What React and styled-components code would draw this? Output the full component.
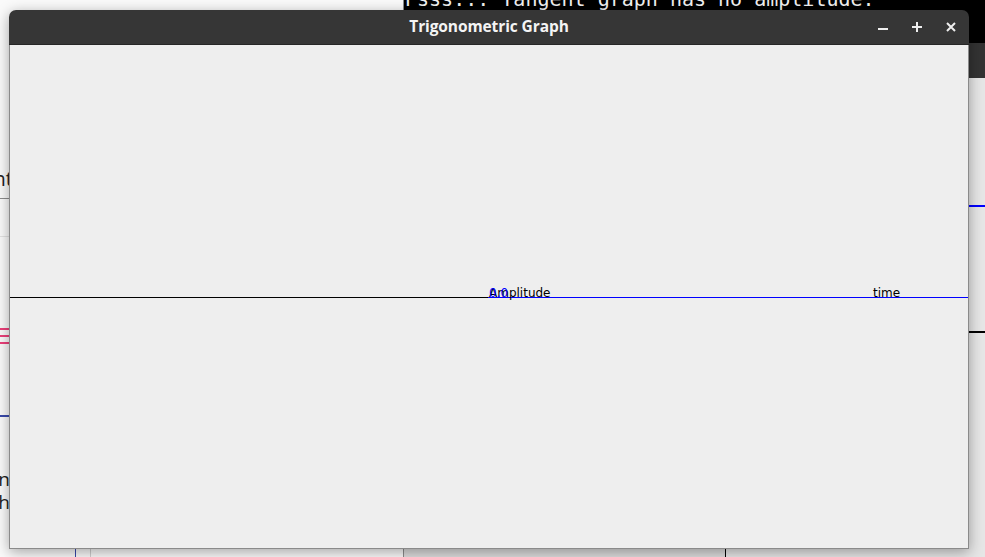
import React from 'react';
import styled, { createGlobalStyle } from 'styled-components';

const GlobalStyle = createGlobalStyle`
  html, body {
    margin: 0;
    padding: 0;
    overflow: hidden;
    background: #fafafa;
  }
`;

const Desktop = styled.div`
  position: relative;
  width: 985px;
  height: 557px;
  overflow: hidden;
  background: #fafafa;
  font-family: 'Open Sans', 'Noto Sans', sans-serif;
`;

/* ---------- background apps (mostly hidden behind the graph window) ---------- */

const LeftApp = styled.div`
  position: absolute;
  left: 0;
  top: 0;
  width: 403px;
  height: 557px;
  background: #fafafa;
  display: flex;
  flex-direction: column;
`;

const HeaderRow = styled.div`
  height: 198px;
  border-bottom: 1px solid #8c8c8c;
  display: flex;
  align-items: flex-end;
  justify-content: flex-end;
  width: 10px;
`;

const HeaderText = styled.span`
  font-size: 20px;
  line-height: 28px;
  color: #222;
  white-space: nowrap;
  margin-bottom: 5px;
  margin-right: -3px;
`;

const FaintRule = styled.div`
  margin-top: 37px;
  height: 1px;
  width: 10px;
  background: #e2e2e2;
`;

const MenuIcon = styled.div`
  margin-top: 91px;
  width: 10px;
  display: flex;
  flex-direction: column;
  gap: 5px;

  span {
    display: block;
    height: 2px;
    background: #ec407a;
  }
`;

const BlueRule = styled.div`
  margin-top: 71px;
  width: 10px;
  height: 2px;
  background: #3949ab;
`;

const BodyText = styled.div`
  margin-top: 51px;
  display: flex;
  flex-direction: column;
  align-items: flex-end;
  width: 10px;
  font-size: 19px;
  line-height: 23px;
  color: #222;
  white-space: nowrap;
`;

const BottomStrip = styled.div`
  margin-top: auto;
  height: 8px;
  display: flex;
`;

const StripCell = styled.div`
  width: ${(p) => p.$w}px;
  border-right: 1px solid ${(p) => p.$line};
  background: ${(p) => p.$bg};
`;

const RightApp = styled.div`
  position: absolute;
  left: 403px;
  top: 0;
  right: 0;
  bottom: 0;
  display: flex;
  flex-direction: column;
  border-left: 1px solid #8c8c8c;
`;

const Terminal = styled.div`
  height: 43px;
  background: #000;
  color: #f2f2f2;
  font-family: 'DejaVu Sans Mono', 'Liberation Mono', monospace;
  font-size: 20px;
  line-height: 20px;
  white-space: pre;
  overflow: hidden;
`;

const TerminalLine = styled.div`
  margin-top: -11px;
  padding-left: 1px;
`;

const BackTitle = styled.div`
  height: 35px;
  background: #333;
`;

const BackBody = styled.div`
  flex: 1;
  background: #e6e6e6;
  display: flex;
  flex-direction: column;
`;

const BackRule = styled.div`
  margin-top: ${(p) => p.$top}px;
  height: ${(p) => p.$h || 1}px;
  background: ${(p) => p.$color};
`;

const BackBottom = styled.div`
  margin-top: auto;
  height: 8px;
  display: flex;
`;

/* ---------- the graph window ---------- */

const Window = styled.div`
  position: absolute;
  left: 9px;
  top: 10px;
  width: 960px;
  height: 539px;
  display: flex;
  flex-direction: column;
  border-radius: 7px 7px 0 0;
  box-shadow: 0 3px 14px rgba(0, 0, 0, 0.35);
`;

const TitleBar = styled.div`
  height: 35px;
  flex: none;
  box-sizing: border-box;
  background: #363636;
  border-radius: 7px 7px 0 0;
  border-bottom: 1px solid #262626;
  display: grid;
  grid-template-columns: 1fr auto 1fr;
  align-items: center;
`;

const Title = styled.div`
  grid-column: 2;
  color: #f4f4f4;
  font-family: 'Open Sans', 'Noto Sans', sans-serif;
  font-weight: 700;
  font-size: 15.5px;
  letter-spacing: -0.1px;
  margin-bottom: 2px;
`;

const Controls = styled.div`
  grid-column: 3;
  justify-self: end;
  display: flex;
  padding-right: 1px;
  height: 100%;
`;

const ControlButton = styled.button`
  width: 34px;
  height: 100%;
  border: none;
  padding: 0;
  background: transparent;
  display: flex;
  align-items: center;
  justify-content: center;
  cursor: pointer;

  svg {
    display: block;
  }
`;

const Canvas = styled.div`
  flex: 1;
  background: #eeeeee;
  border: 1px solid #8a8a8a;
  border-top: none;
  overflow: hidden;
`;

const GraphSvg = styled.svg`
  display: block;
  width: 100%;
  height: 100%;
  font-family: 'DejaVu Sans', sans-serif;
  font-size: 12px;
  shape-rendering: crispEdges;
`;

const MinimizeIcon = () => (
  <svg width="12" height="12" viewBox="0 0 12 12">
    <rect x="1" y="7" width="10" height="2" fill="#eeeeee" />
  </svg>
);

const MaximizeIcon = () => (
  <svg width="12" height="12" viewBox="0 0 12 12">
    <rect x="1" y="5" width="10" height="2" fill="#eeeeee" />
    <rect x="5" y="1" width="2" height="10" fill="#eeeeee" />
  </svg>
);

const CloseIcon = () => (
  <svg width="12" height="12" viewBox="0 0 12 12">
    <path d="M2 2 L10 10 M10 2 L2 10" stroke="#eeeeee" strokeWidth="2" />
  </svg>
);

// graph drawn the way the Java canvas paints it: x axis through the middle
// (blue from the origin on), amplitude label at the centre, time label near the right end
const Graph = () => {
  const axisY = 252.5;
  const originX = 479;
  return (
    <GraphSvg>
      <line x1="0" y1={axisY} x2={originX - 1} y2={axisY} stroke="#000" strokeWidth="1" />
      <line x1={originX - 1} y1={axisY} x2="958" y2={axisY} stroke="#0000ff" strokeWidth="1" />
      <text x={originX} y="252" fill="#000">Amplitude</text>
      <text x={originX} y="252" fill="#0000ff">0.0</text>
      <text x="863" y="252" fill="#000">time</text>
    </GraphSvg>
  );
};

export default function App() {
  return (
    <>
      <GlobalStyle />
      <Desktop>
        <LeftApp>
          <HeaderRow>
            <HeaderText>Content</HeaderText>
          </HeaderRow>
          <FaintRule />
          <MenuIcon>
            <span />
            <span />
            <span />
          </MenuIcon>
          <BlueRule />
          <BodyText>
            <span>Sin</span>
            <span>Graph</span>
          </BodyText>
          <BottomStrip>
            <StripCell $w={75} $line="#3949ab" $bg="#fafafa" />
            <StripCell $w={14} $line="#d0d0d0" $bg="#fafafa" />
          </BottomStrip>
        </LeftApp>

        <RightApp>
          <Terminal>
            <TerminalLine>Psss... Tangent graph has no amplitude.</TerminalLine>
          </Terminal>
          <BackTitle />
          <BackBody>
            <BackRule $top={127} $h={2} $color="#0000ff" />
            <BackRule $top={124} $h={2} $color="#000" />
            <BackBottom>
              <StripCell $w={321} $line="#000" $bg="#dcdcdc" />
            </BackBottom>
          </BackBody>
        </RightApp>

        <Window>
          <TitleBar>
            <Title>Trigonometric Graph</Title>
            <Controls>
              <ControlButton aria-label="Minimize"><MinimizeIcon /></ControlButton>
              <ControlButton aria-label="Maximize"><MaximizeIcon /></ControlButton>
              <ControlButton aria-label="Close"><CloseIcon /></ControlButton>
            </Controls>
          </TitleBar>
          <Canvas>
            <Graph />
          </Canvas>
        </Window>
      </Desktop>
    </>
  );
}
